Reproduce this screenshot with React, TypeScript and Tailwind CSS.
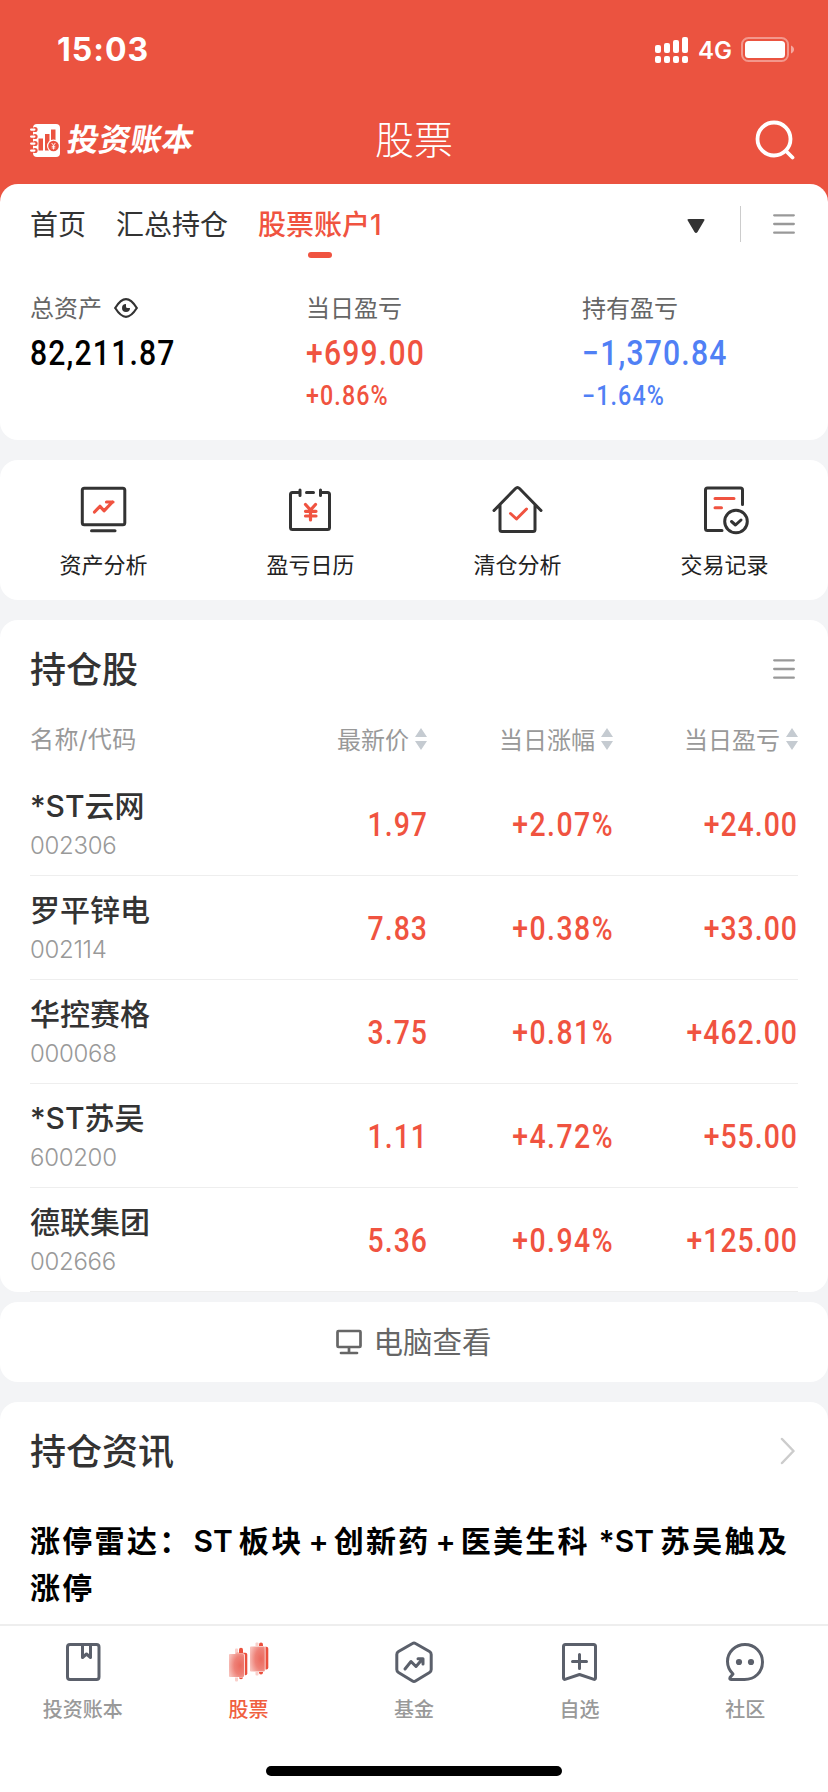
import type { ReactNode } from "react";

const CJK = "font-['Noto_Sans_CJK_SC',sans-serif]";
const MIXED = "font-['Inter','Noto_Sans_CJK_SC',sans-serif]";
// narrowed Roboto stands in for a DIN style figure face
const NUM = "font-['Roboto','Noto_Sans_CJK_SC',sans-serif] font-medium scale-x-[0.86]";

const tabs = ["首页", "汇总持仓", "股票账户1"];

const summary = [
  { label: "总资产", value: "82,211.87", percent: "", tone: "text-black" },
  { label: "当日盈亏", value: "+699.00", percent: "+0.86%", tone: "text-[#f05340]" },
  { label: "持有盈亏", value: "−1,370.84", percent: "−1.64%", tone: "text-[#5080f5]" },
];

const holdings = [
  { name: "*ST云网", code: "002306", price: "1.97", change: "+2.07%", profit: "+24.00" },
  { name: "罗平锌电", code: "002114", price: "7.83", change: "+0.38%", profit: "+33.00" },
  { name: "华控赛格", code: "000068", price: "3.75", change: "+0.81%", profit: "+462.00" },
  { name: "*ST苏吴", code: "600200", price: "1.11", change: "+4.72%", profit: "+55.00" },
  { name: "德联集团", code: "002666", price: "5.36", change: "+0.94%", profit: "+125.00" },
];

function StatusBar() {
  return (
    <div className="flex h-[99px] items-center justify-between pr-[33px] pl-[57px] text-white">
      <span className="font-['Inter',sans-serif] text-[32px] leading-none font-bold tracking-[1px]">15:03</span>
      <div className="flex items-center">
        <svg className="h-[26px] w-[33px]" viewBox="0 0 33 26" fill="currentColor">
          <rect x="0" y="8" width="6" height="8" rx="2" />
          <rect x="9" y="6" width="6" height="10" rx="2" />
          <rect x="18" y="3" width="6" height="13" rx="2" />
          <rect x="27" y="0" width="6" height="16" rx="2" />
          <rect x="0" y="19" width="6" height="7" rx="2" />
          <rect x="9" y="19" width="6" height="7" rx="2" />
          <rect x="18" y="19" width="6" height="7" rx="2" />
          <rect x="27" y="19" width="6" height="7" rx="2" />
        </svg>
        <span className="mt-0.5 ml-2.5 w-[43px] font-['Inter',sans-serif] text-[24px] leading-none font-semibold">4G</span>
        <svg className="h-[25px] w-[54px]" viewBox="0 0 54 25">
          <rect x="1" y="1" width="46" height="23" rx="6.5" fill="none" stroke="#fff" strokeOpacity=".4" strokeWidth="2" />
          <rect x="4" y="4" width="40" height="17" rx="3.5" fill="#fff" />
          <path d="M50 8.5c4 1.500 4 6.500 0 8z" fill="#fff" fillOpacity=".5" />
        </svg>
      </div>
    </div>
  );
}

function LogoIcon() {
  return (
    <svg className="h-[33px] w-[30px]" viewBox="0 0 30 33">
      <rect x="3" y="0" width="27" height="33" rx="4" fill="#fff" />
      {[5, 12, 19, 26].map((y) => (
        <g key={y}>
          <circle cx="5" cy={y + 0.5} r="2.600" fill="#eb5340" />
          <rect x="0" y={y - 0.5} width="5.500" height="2.200" rx="1.100" fill="#fff" />
        </g>
      ))}
      <rect x="8.500" y="14.500" width="4.500" height="12" fill="#eb5340" />
      <rect x="15" y="10" width="4.500" height="16.500" fill="#eb5340" />
      <rect x="21" y="5.500" width="4.500" height="12" fill="#eb5340" />
      <circle cx="23.500" cy="22" r="6.500" fill="#fff" />
      <circle cx="23.500" cy="22" r="5.300" fill="#eb5340" />
      <path d="M21.700 19l1.800 2.500 1.800-2.500M23.500 21.500v4M21.700 22.300h3.600M21.700 24h3.600" stroke="#fff" strokeWidth=".9" fill="none" />
    </svg>
  );
}

function Menu() {
  return (
    <svg className="h-[22px] w-[22px]" viewBox="0 0 22 22" stroke="#999" strokeWidth="2.300" strokeLinecap="round">
      <path d="M1.200 2.300h19.600M1.200 11h19.600M1.200 19.700h19.600" />
    </svg>
  );
}

function SortIcon() {
  return (
    <svg className="h-[22px] w-3" viewBox="0 0 12 22" fill="#c5cbd1">
      <path d="M6 0l6 9H0zM6 22l6-9H0z" />
    </svg>
  );
}

function SortHeader({ children }: { children: ReactNode }) {
  return (
    <div className="flex h-[26px] items-center justify-end gap-[6px]">
      <span>{children}</span>
      <SortIcon />
    </div>
  );
}

function Figure({ children, wide }: { children: ReactNode; wide?: boolean }) {
  return (
    <div
      className={`${NUM} mt-0.5 -mr-0.5 origin-right text-right text-[33px] leading-none text-[#f05340] ${wide ? "tracking-[1.7px]" : "tracking-[1.2px]"}`}
    >
      {children}
    </div>
  );
}

function Plus() {
  return <span className="px-[5px] tracking-normal">+</span>;
}

const tools = [
  {
    label: "资产分析",
    icon: (
      <>
        <rect x="4.300" y="4.300" width="42.500" height="36.500" rx="2" />
        <path d="M13.500 46.700h23.500" />
        <path stroke="#f05340" strokeWidth="3.200" d="M16.500 28l5.500-5.700 4 4.500 8.500-8.800M28.500 18h6.500" />
      </>
    ),
  },
  {
    label: "盈亏日历",
    icon: (
      <>
        <path d="M14.500 8.500h-7q-2 0-2 2v33q0 2 2 2h35q2 0 2-2v-33q0-2-2-2h-7M15 6v5.500M35.500 6v5.500M21.500 8.500h7" />
        <path stroke="#f05340" strokeWidth="3.200" d="M20.500 20.500l5 5.500 5-5.500M25.500 26v10M20.500 27.300h10.500M20.500 32h10.500" />
      </>
    ),
  },
  {
    label: "清仓分析",
    icon: (
      <>
        <path d="M2 26.500L23.500 4.500q2-2 4 0L49 26.500M8 21V45.500q0 2 2 2h31q2 0 2-2V21" />
        <path stroke="#f05340" d="M18.500 29.500l6 5.500L34.500 25" />
      </>
    ),
  },
  {
    label: "交易记录",
    icon: (
      <>
        <path d="M43.500 20.500V6q0-2-2-2h-33q-2 0-2 2V44.500q0 2 2 2H23" />
        <path stroke="#f05340" d="M16 14.500h19M16 23.700h6.500" />
        <circle cx="37" cy="37.500" r="11.300" />
        <path d="M32.500 37.500l4 3.500 5.500-5" />
      </>
    ),
  },
];

const nav = [
  {
    label: "投资账本",
    icon: (
      <>
        <rect x="5.500" y="4.500" width="31.500" height="35" rx="2.500" />
        <path d="M20.500 4.500V17.500l4-3.500 4 3.500V4.500" />
      </>
    ),
  },
  {
    label: "股票",
    active: true,
    icon: (
      <g stroke="none">
        <defs>
          <radialGradient id="candle" cx=".75" cy=".5" r=".8">
            <stop offset="0" stopColor="#eb6a5e" />
            <stop offset=".5" stopColor="#ee8177" />
            <stop offset="1" stopColor="#f7c0ba" />
          </radialGradient>
        </defs>
        <rect x="8" y="8.500" width="3" height="33" rx="1" fill="#f9cfca" />
        <rect x="12" y="7.700" width="4" height="31.500" rx="2" fill="#eb4f3d" />
        <rect x="8" y="12.700" width="12.300" height="22.500" rx="2" fill="#eb4f3d" />
        <rect x="1.500" y="13.500" width="16.300" height="24" rx="1.500" fill="#fff" />
        <rect x="2" y="14" width="15" height="23" rx="1" fill="url(#candle)" />
        <rect x="28.500" y="2.500" width="3" height="33" rx="1" fill="#f9cfca" />
        <rect x="32" y="2.500" width="4" height="32" rx="2" fill="#eb4f3d" />
        <rect x="30" y="6.700" width="11.300" height="22.700" rx="2" fill="#eb4f3d" />
        <rect x="22.500" y="6" width="16" height="26" rx="1.500" fill="#fff" />
        <rect x="23" y="6.500" width="14.800" height="25" rx="1" fill="url(#candle)" />
      </g>
    ),
  },
  {
    label: "基金",
    icon: (
      <>
        <path d="M19.500 3.500q1.500-1 3 0L36.500 11.500q1.700 1 1.700 3v15q0 2-1.700 3L22.500 41q-1.500 1-3 0L5.500 32.500q-1.700-1-1.700-3v-15q0-2 1.700-3z" />
        <path d="M12 29l6-7.500 5 5 6.500-7.500M25 18.800h5V24" />
      </>
    ),
  },
  {
    label: "自选",
    icon: (
      <path d="M6.500 4.500h28q2 0 2 2v31.500q0 2-2.200 1.200L20.500 34.500 6.700 39.200Q4.500 40 4.500 38V6.500q0-2 2-2zM13.500 21.500h14M20.500 14.500v14" />
    ),
  },
  {
    label: "社区",
    icon: (
      <>
        <path d="M20.500 39.500c10.500 0 18-7.500 18-17.500S30.500 4.500 21 4.500 3.500 12 3.500 21.500c0 5.500 2.500 9.500 5.500 12.500L6 37.500q-.8 2 1.500 2z" />
        <circle cx="15" cy="22" r="3.100" fill="#5b606b" stroke="none" />
        <circle cx="27" cy="22" r="3.100" fill="#5b606b" stroke="none" />
      </>
    ),
  },
];

export default function App() {
  return (
    <div className={`${CJK} flex h-[1792px] w-[828px] flex-col overflow-hidden bg-[#f3f4f6] text-[#333]`}>
      <div className="h-[204px] shrink-0 bg-[#eb5340]">
        <StatusBar />
        <header className="grid h-[82px] grid-cols-3 items-center px-[30px] text-white">
          <div className="flex items-center gap-[8px]">
            <LogoIcon />
            <span className="-mt-[5px] -skew-x-10 text-[31.5px] leading-none font-bold">投资账本</span>
          </div>
          <h1 className="-mt-1.5 text-center text-[39px] leading-none font-light">股票</h1>
          <svg className="mr-[3px] h-10 w-10 justify-self-end" viewBox="0 0 40 40" fill="none" stroke="#fff" strokeWidth="3.800" strokeLinecap="round">
            <circle cx="19" cy="19" r="16.500" />
            <path d="M31 31l6.500 6.500" />
          </svg>
        </header>
      </div>

      <section className="-mt-5 h-64 shrink-0 rounded-[18px] bg-white">
        <div className="flex h-20 items-center pr-[33px] pl-[30px] text-[28px] leading-none">
          <nav className={`${MIXED} mt-px flex flex-1 gap-[30px]`}>
            {tabs.map((tab, i) => (
              <div key={tab} className={i === 2 ? "relative font-medium text-[#f05340]" : ""}>
                {tab}
                {i === 2 && <i className="absolute top-[41px] left-1/2 h-1.5 w-6 -translate-x-1/2 rounded-[3px] bg-[#f05340]" />}
              </div>
            ))}
          </nav>
          <svg className="mt-1 h-[14px] w-[18px]" viewBox="0 0 18 14" fill="#333">
            <path d="M2 0h14q2.500 0 1 2l-6.500 11q-1.500 2-3 0L1 2Q-.5 0 2 0z" />
          </svg>
          <i className="mr-8 ml-[35px] h-9 w-px bg-[#ccc]" />
          <Menu />
        </div>
        <div className="grid grid-cols-3 pt-[30px]">
          {summary.map((item, i) => (
            <div key={item.label} className="pl-[30px]">
              <div className="flex h-[26px] items-center text-[24px] leading-none text-[#666]">
                <span className="-mt-px">{item.label}</span>
                {i === 0 && (
                  <svg className="mt-0.5 ml-3 h-5 w-6" viewBox="0 0 24 20" fill="none" stroke="#333" strokeWidth="2.200">
                    <path d="M1.200 10C5 4 8 1.200 12 1.200S19 4 22.800 10C19 16 16 18.800 12 18.800S5 16 1.200 10z" />
                    <path d="M12 6a4 4 0 1 0 4 4h-2.500q-1.500 0-1.500-1.500z" fill="#333" stroke="none" />
                  </svg>
                )}
              </div>
              <div className={`${NUM} ${item.tone} mt-[14px] origin-left text-[35px] leading-[40px] tracking-[1.4px]`}>{item.value}</div>
              <div className={`${NUM} ${item.tone} mt-[7px] origin-left text-[27px] leading-[30px] tracking-[1.3px]`}>{item.percent}</div>
            </div>
          ))}
        </div>
      </section>

      <section className="mt-5 grid h-[140px] shrink-0 grid-cols-4 rounded-[18px] bg-white">
        {tools.map((tool) => (
          <div key={tool.label} className="flex flex-col items-center pt-6">
            <svg className="h-[51px] w-[51px]" viewBox="0 0 51 51" fill="none" stroke="#333" strokeWidth="3" strokeLinecap="round" strokeLinejoin="round">
              {tool.icon}
            </svg>
            <span className="mt-[17px] text-[22px] leading-[22px] text-[#222]">{tool.label}</span>
          </div>
        ))}
      </section>

      <section className="mt-5 h-[672px] shrink-0 rounded-[18px] bg-white px-[30px]">
        <div className="flex h-[98px] items-center justify-between pr-[3px]">
          <h2 className="-mt-[4px] text-[36px] leading-none font-medium">持仓股</h2>
          <Menu />
        </div>
        <div className="grid h-[54px] grid-cols-[397px_186px_185px] items-start pt-[8px] text-[24px] leading-[26px] text-[#999]">
          <div className="flex justify-between">
            <span className={`${MIXED} mt-px tracking-[0.4px]`}>名称/代码</span>
            <SortHeader>最新价</SortHeader>
          </div>
          <SortHeader>当日涨幅</SortHeader>
          <SortHeader>当日盈亏</SortHeader>
        </div>
        {holdings.map((row) => (
          <div key={row.code} className="grid h-[104px] grid-cols-[200px_196px_186px_184px] items-center border-b border-[#eee]">
            <div className="pt-[6px]">
              <div className={`${MIXED} text-[30px] leading-[38px] font-medium`}>{row.name}</div>
              <div className="font-['Inter',sans-serif] text-[24px] leading-[41px] font-light tracking-[-0.3px] text-[#999]">{row.code}</div>
            </div>
            <Figure>{row.price}</Figure>
            <Figure wide>{row.change}</Figure>
            <Figure>{row.profit}</Figure>
          </div>
        ))}
      </section>

      <section className="mt-2.5 flex h-20 shrink-0 items-center justify-center gap-[11px] rounded-[18px] bg-white text-[29.5px] leading-none text-[#666]">
        <svg className="h-[26px] w-[26px]" viewBox="0 0 26 26" fill="none" stroke="#666" strokeWidth="2.700" strokeLinecap="round" strokeLinejoin="round">
          <path d="M2.500 2h21q1 0 1 1v14q0 1-1 1h-21q-1 0-1-1V3q0-1 1-1zM13 18v5.500M5 24h16" />
        </svg>
        <span className="-mt-0.5">电脑查看</span>
      </section>

      <section className="mt-5 h-[222px] shrink-0 overflow-hidden rounded-t-[18px] bg-white px-[30px]">
        <div className="flex h-[98px] items-center justify-between pr-[3px]">
          <h2 className="-mt-[4px] text-[36px] leading-none font-medium">持仓资讯</h2>
          <svg className="h-[28px] w-[15px]" viewBox="0 0 15 28" fill="none" stroke="#ccc" strokeWidth="2.500" strokeLinecap="round" strokeLinejoin="round">
            <path d="M2 2l11.500 12L2 26" />
          </svg>
        </div>
        <div className={`${MIXED} mt-[18px] text-[30px] leading-[47px] font-semibold tracking-[2.300px] text-black`}>
          <p className="whitespace-nowrap">
            涨停雷达：<span className="pr-1.5 pl-0.5 tracking-normal">ST</span>板块
            <Plus />
            创新药
            <Plus />
            医美生科<span className="pr-1.5 pl-px tracking-normal"> *ST</span>苏吴触及
          </p>
          <p>涨停</p>
        </div>
      </section>

      <footer className="h-[168px] shrink-0 border-t-2 border-[#eee] bg-white">
        <div className="grid h-[140px] grid-cols-5">
          {nav.map((item) => (
            <div key={item.label} className="flex flex-col items-center pt-[14px]">
              <svg className="h-[44px] w-[42px]" viewBox="0 0 42 44" fill="none" stroke="#5b606b" strokeWidth="3" strokeLinecap="round" strokeLinejoin="round">
                {item.icon}
              </svg>
              <span className={`mt-[15px] text-[20px] leading-5 font-medium ${item.active ? "text-[#f0603f]" : "text-[#999]"}`}>{item.label}</span>
            </div>
          ))}
        </div>
        <div className="mx-auto h-2.5 w-[296px] rounded-full bg-black" />
      </footer>
    </div>
  );
}
